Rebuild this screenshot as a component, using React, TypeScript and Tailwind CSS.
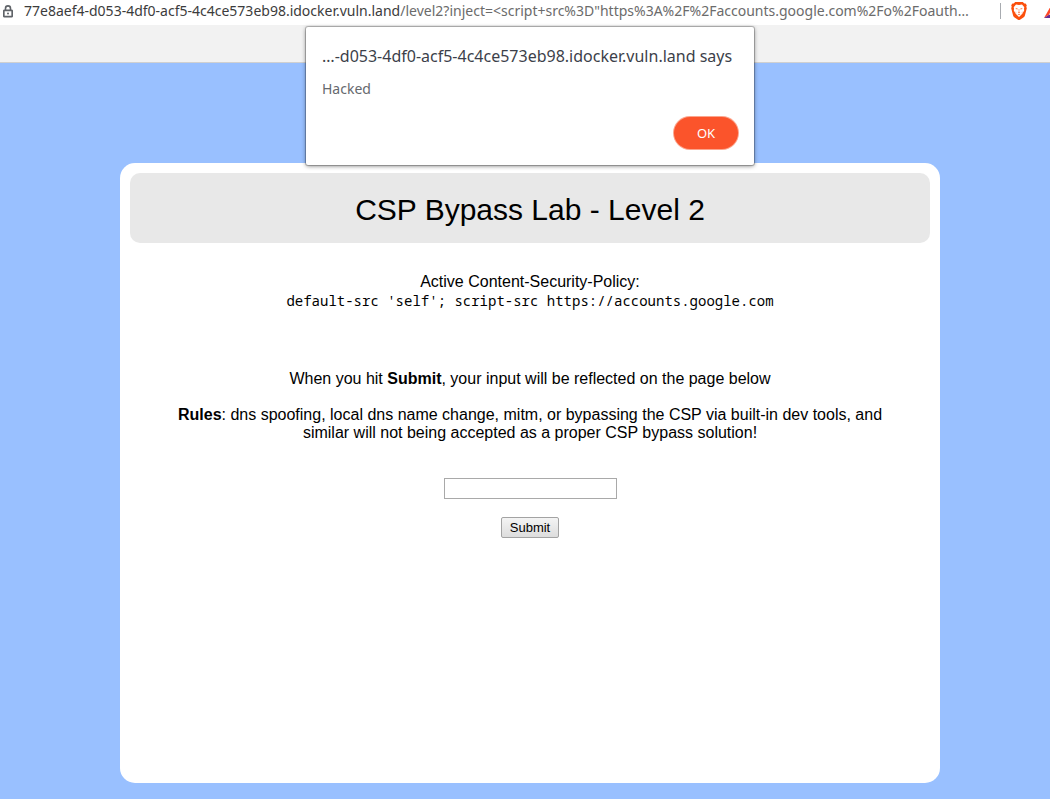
import React from 'react';

function LockIcon() {
  return (
    <svg width="10" height="13" viewBox="0 0 10 13" className="shrink-0" aria-hidden="true">
      <path d="M2.500 5.500V3.400a2.500 2.500 0 0 1 5 0v2.100" fill="none" stroke="#5f6368" strokeWidth="1.600" />
      <rect x="0.800" y="5.300" width="8.400" height="6.400" rx="0.600" fill="none" stroke="#5f6368" strokeWidth="1.700" />
      <circle cx="5" cy="8.500" r="1" fill="#5f6368" />
    </svg>
  );
}

function BraveIcon() {
  return (
    <svg width="16" height="18" viewBox="0 0 16 18" aria-hidden="true">
      <path
        d="M4.200 0h7.600l1.500 1.600 1.300-.1 1.200 1.800-.5 1.400.5 1.600-1.900 7.200c-.3 1-.8 1.600-1.500 2.100L9 17.700c-.6.4-1.400.4-2 0l-3.400-2.100c-.7-.5-1.200-1.100-1.500-2.100L.2 6.300l.5-1.600-.5-1.400 1.200-1.800 1.300.1z"
        fill="#fb4f0c"
      />
      <path d="M5 2.500l3 .4 3-.4 2.300 2.700-.3 1.600.2 1.700-1.900 3.300L8 15l-3.300-3.200-1.900-3.300.2-1.700-.3-1.600z" fill="#fff" />
      <path
        d="M4.700 5.900l2 .6-.2.900-1.700-.5zM11.300 5.900l-2 .6.2.9 1.700-.5zM7.700 7h.6v2.700l.9.6L8 11.300l-1.200-1 .9-.6zM4.500 9.200l.9 1.900-.5.500zM11.500 9.200l-.9 1.900.5.500zM6.600 12.300L8 11.800l1.400.5L8 13.300z"
        fill="#fb7a4c"
      />
    </svg>
  );
}

function RewardsIcon() {
  return (
    <svg width="16" height="14" viewBox="0 0 16 14" aria-hidden="true">
      <path d="M8 0L0 14l5-3.200L8 5z" fill="#ff4724" />
      <path d="M8 0l8 14-5-3.200L8 5z" fill="#9e1f63" />
      <path d="M0 14h16l-5-3.200H5z" fill="#662d91" />
    </svg>
  );
}

function AddressBar() {
  return (
    <div className="flex h-[25px] items-center overflow-hidden bg-white pb-[3px] pl-[3px]">
      <LockIcon />
      <div className="ml-[11px] min-w-0 flex-1 truncate text-[14px] leading-5 text-[#6b6b6b]">
        <span className="text-[#3c3c3c]">77e8aef4-d053-4df0-acf5-4c4ce573eb98.idocker.vuln.land</span>
        {'/level2?inject=<script+src%3D"https%3A%2F%2Faccounts.google.com%2Fo%2Foauth…'}
      </div>
      <div className="flex shrink-0 items-center">
        <span className="h-4 w-px bg-[#a8abb0]" />
        <button type="button" aria-label="Brave Shields" className="ml-[10px]">
          <BraveIcon />
        </button>
        <button type="button" aria-label="Brave Rewards" className="ml-[17px] w-[6px] overflow-hidden">
          <RewardsIcon />
        </button>
      </div>
    </div>
  );
}

function AlertDialog() {
  return (
    <div
      role="alertdialog"
      aria-labelledby="alert-title"
      aria-describedby="alert-message"
      className="absolute top-[27px] right-0 left-[10px] z-10 mx-auto flex w-[448px] flex-col rounded-[2px] bg-white px-4 pt-[18px] pb-4 shadow-[0_0_0_1px_rgba(0,0,0,0.2),0_1px_4px_rgba(0,0,0,0.5)]"
    >
      <h2 id="alert-title" className="text-[16px] leading-[22px] whitespace-nowrap text-[#3c3f4a]">
        …-d053-4df0-acf5-4c4ce573eb98.idocker.vuln.land says
      </h2>
      <p id="alert-message" className="mt-3 text-[14px] leading-5 text-[#66696e]">
        Hacked
      </p>
      <button
        type="button"
        className="mt-[18px] h-8 w-16 self-end rounded-full bg-[#fb542b] pt-px text-[13px] text-white shadow-[0_0_0_1px_#fca58d]"
      >
        OK
      </button>
    </div>
  );
}

export default function App() {
  return (
    <div className="relative flex min-h-screen flex-col bg-[#99c0ff] font-['Noto_Sans',sans-serif]">
      <AddressBar />
      <div className="h-[38px] border-b border-[#d0d0d0] bg-[#f2f2f2]" />
      <AlertDialog />
      <main className="flex flex-1 justify-center pt-[100px] pb-4 pl-[10px] font-['Liberation_Sans',Arial,sans-serif] text-[16px] leading-[18px] text-black">
        <div className="w-full max-w-[820px] rounded-[15px] bg-white p-[10px] text-center">
          <h1 className="rounded-[10px] bg-[#e8e8e8] pt-5 pb-4 text-[30px] leading-[34px]">CSP Bypass Lab - Level 2</h1>
          <div className="px-10 pt-[30px]">
            <p>Active Content-Security-Policy:</p>
            <code className="block font-['Noto_Sans_Mono','DejaVu_Sans_Mono',monospace] text-[14px] leading-5">
              default-src 'self'; script-src https://accounts.google.com
            </code>
            <p className="mt-[59px]">
              When you hit <b>Submit</b>, your input will be reflected on the page below
            </p>
            <p className="mt-[18px]">
              <b>Rules</b>: dns spoofing, local dns name change, mitm, or bypassing the CSP via built-in dev tools, and
              similar will not being accepted as a proper CSP bypass solution!
            </p>
            <form className="mt-9 flex flex-col items-center gap-[18px]" onSubmit={(e) => e.preventDefault()}>
              <input
                type="text"
                name="inject"
                aria-label="Input"
                className="h-[21px] w-[173px] border border-[#a9a9a9] bg-white px-px text-[13px]"
              />
              <button
                type="submit"
                className="h-[21px] w-[58px] rounded-[2px] border border-[#a3a3a3] bg-linear-to-b from-[#f4f4f4] to-[#dddddd] text-[13px] leading-[15px]"
              >
                Submit
              </button>
            </form>
          </div>
        </div>
      </main>
    </div>
  );
}
